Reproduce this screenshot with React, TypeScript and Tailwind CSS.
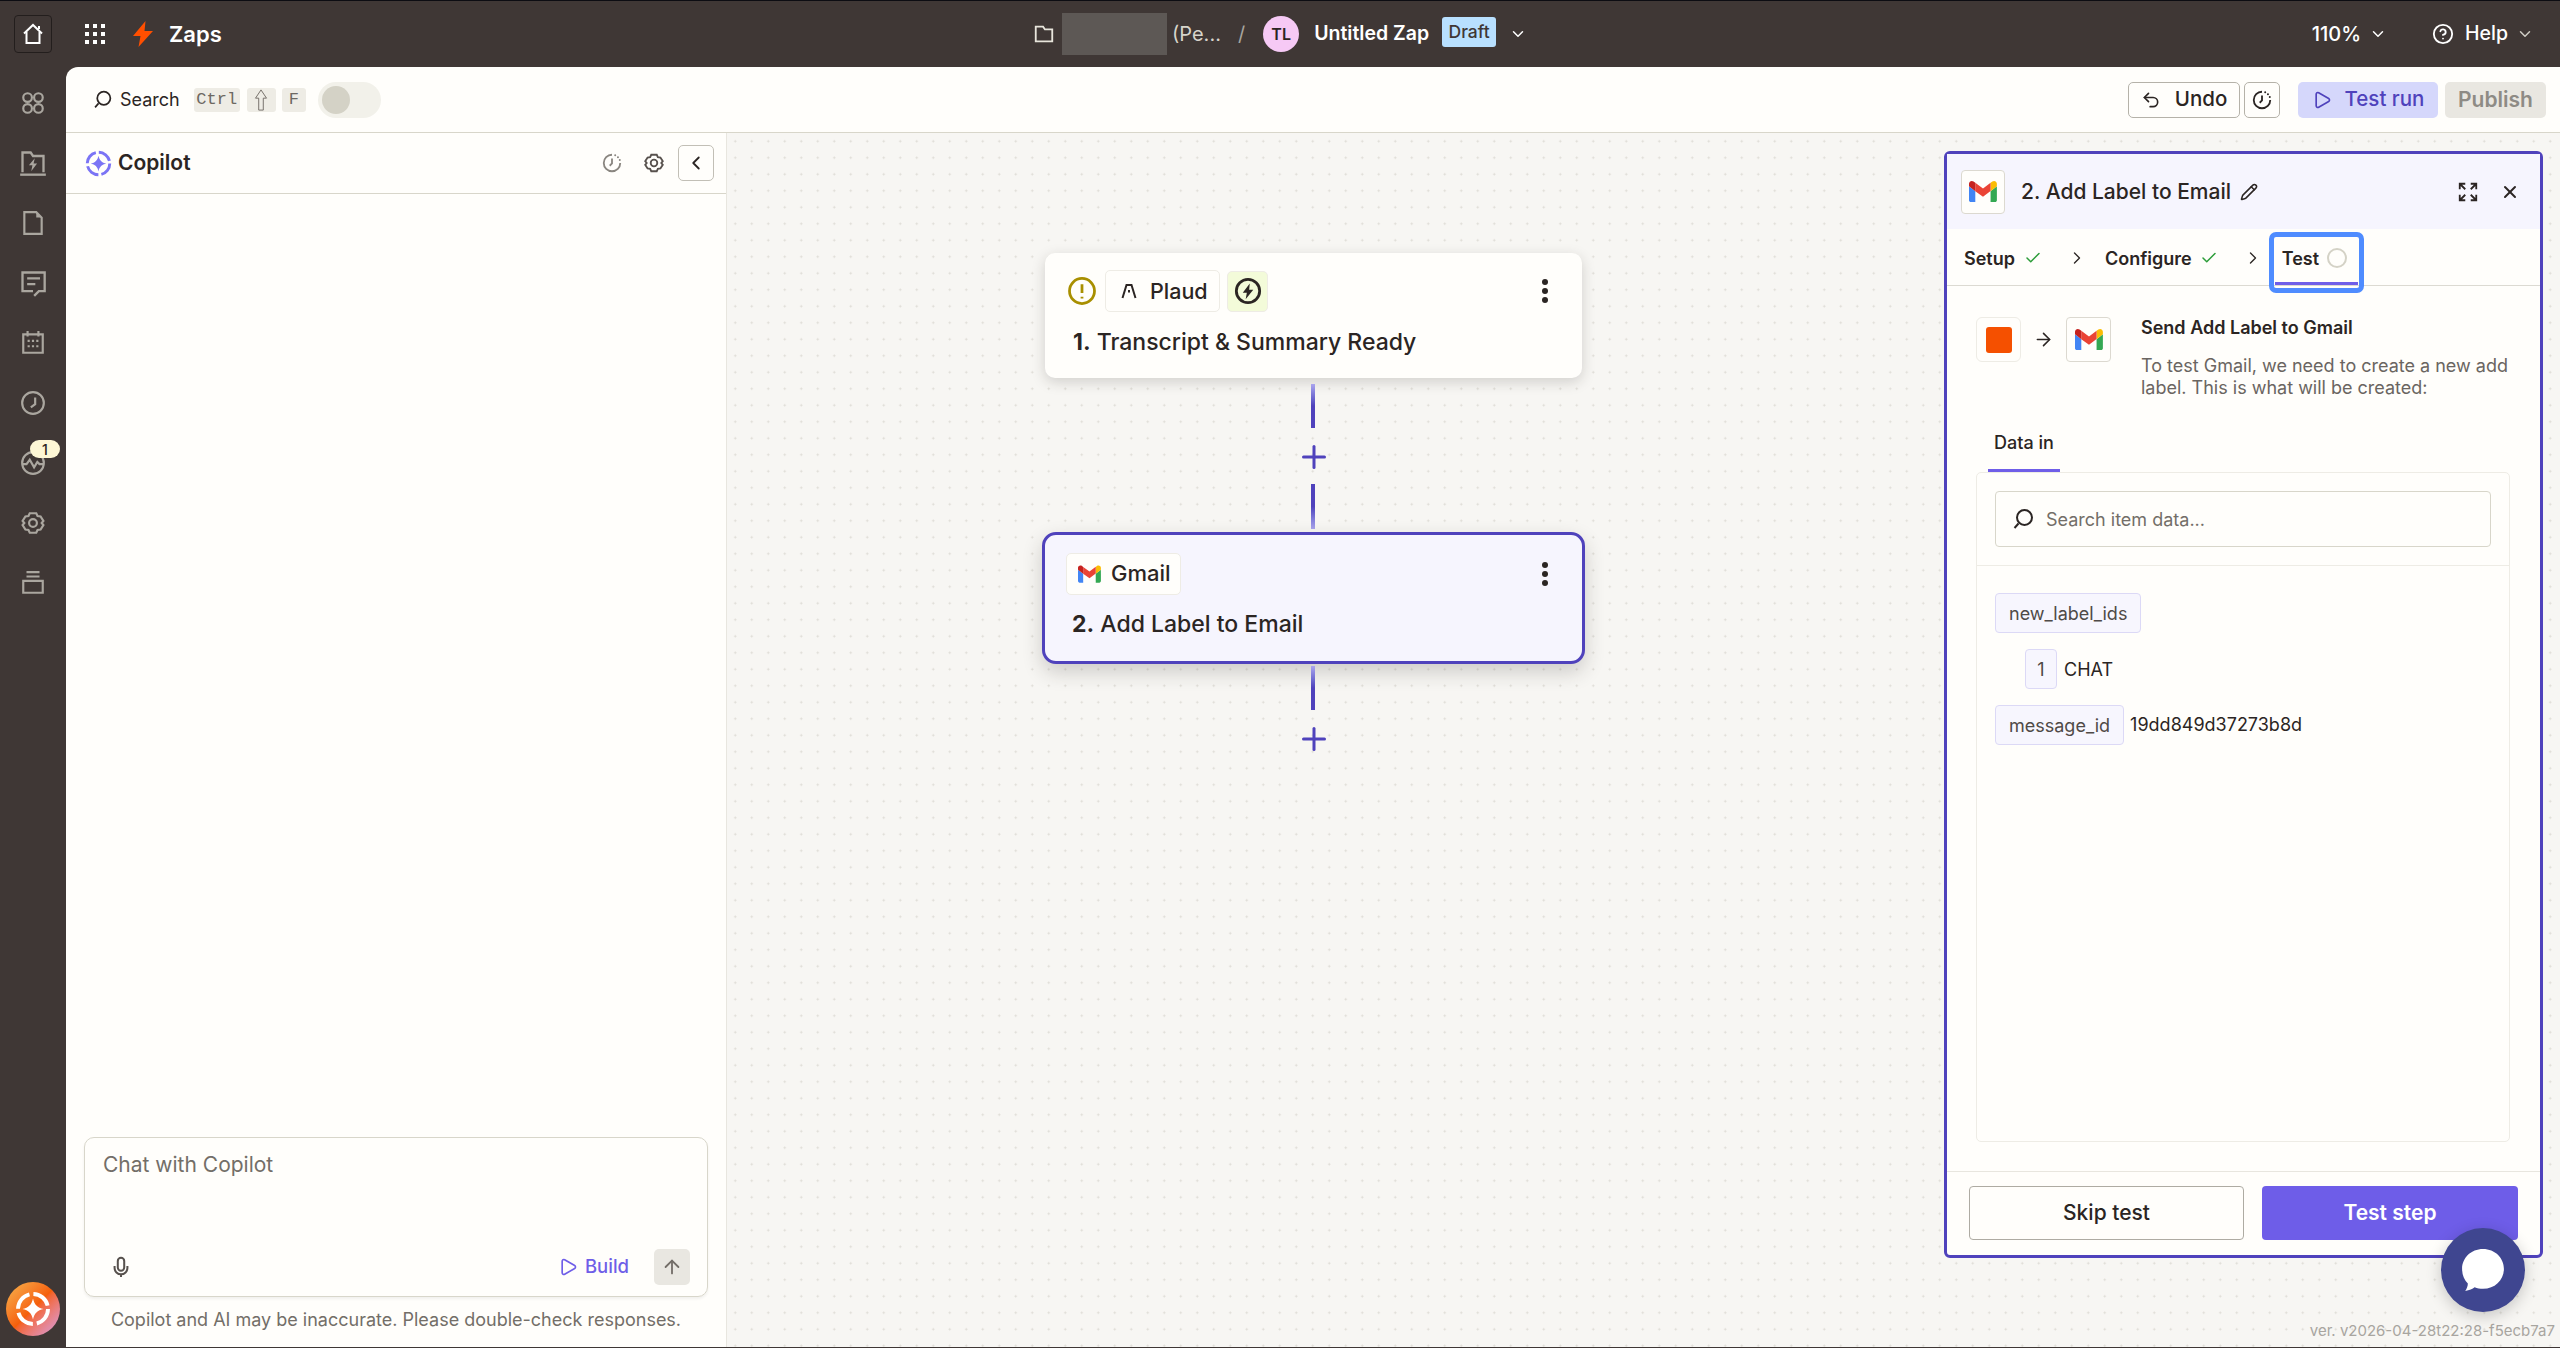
import {
  ArrowRight,
  ArrowUp,
  ChevronDown,
  ChevronLeft,
  ChevronRight,
  Check,
  CircleHelp,
  Pencil,
  Play,
  Plus,
  Undo2,
  X,
} from "lucide-react";

function Gmail({ className }: { className?: string }) {
  return (
    <svg viewBox="0 0 24 18" className={className}>
      <path fill="#4285F4" d="M1.6 18h3.8V8.7L0 4.6v11.8C0 17.3.7 18 1.6 18z" />
      <path fill="#34A853" d="M18.5 18h3.8c.9 0 1.6-.7 1.6-1.6V4.6l-5.4 4.1z" />
      <path fill="#FBBC04" d="M18.5 1.6v7.1l5.4-4.1V2.4c0-2-2.3-3.1-3.9-1.9z" />
      <path fill="#EA4335" d="M5.4 8.7V1.6L12 6.5l6.5-5v7.1L12 13.5z" />
      <path fill="#C5221F" d="M0 2.4v2.2l5.4 4.1V1.6L3.9.5C2.3-.7 0 .4 0 2.4z" />
    </svg>
  );
}

function Stroke({ className, children }: { className?: string; children: React.ReactNode }) {
  return (
    <svg viewBox="0 0 24 24" fill="none" stroke="currentColor" strokeWidth="2" className={className}>
      {children}
    </svg>
  );
}

function SearchGlyph({ className }: { className?: string }) {
  return (
    <Stroke className={className}>
      <circle cx="13.5" cy="10.5" r="7.5" />
      <path d="M7.5 16.5 L3.5 21" />
    </Stroke>
  );
}

function HistoryGlyph({ className }: { className?: string }) {
  return (
    <Stroke className={className}>
      <path d="M12 3a9 9 0 1 0 9 9" />
      <path d="M12 7v5.5l-2.500 2.500" />
      <path d="M15.500 3.600v.01M18.500 5.600v.01M20.500 8.600v.01" strokeWidth="2.200" strokeLinecap="round" />
    </Stroke>
  );
}

function GearGlyph({ className }: { className?: string }) {
  return (
    <Stroke className={className}>
      <circle cx="12" cy="12" r="3.6" />
      <path d="M9 3h6l1.2 2.6 2.8.4 2.6 4-1.6 2 1.6 2-2.6 4-2.8.4L15 21H9l-1.2-2.6-2.8-.4-2.6-4 1.6-2-1.6-2 2.6-4 2.8-.4z" />
    </Stroke>
  );
}

function Spark({ className, ring, star }: { className?: string; ring: string; star: string }) {
  return (
    <svg viewBox="0 0 24 24" fill="none" className={className}>
      <circle cx="12" cy="12" r="10" stroke={ring} strokeWidth="2.6" strokeDasharray="13 2.7" />
      <path fill={star} d="M12 5c.8 4 3 6.200 7 7-4 .8-6.200 3-7 7-.8-4-3-6.200-7-7 4-.8 6.200-3 7-7z" />
    </svg>
  );
}

function ExpandGlyph({ className }: { className?: string }) {
  return (
    <Stroke className={className}>
      <path d="M3 9V3h6M3 3l6 6" />
      <path d="M21 9V3h-6M21 3l-6 6" />
      <path d="M3 15v6h6M3 21l6-6" />
      <path d="M21 15v6h-6M21 21l-6-6" />
    </Stroke>
  );
}

const railIcons = [
  <Stroke className="size-[26px]" key="apps">
    <circle cx="7" cy="7" r="4" />
    <circle cx="17" cy="7" r="4" />
    <circle cx="7" cy="17" r="4" />
    <circle cx="17" cy="17" r="4" />
  </Stroke>,
  <Stroke className="size-[28px]" key="zaps">
    <path d="M3 20V3h7l2 3h9v14" />
    <path d="M1 22h22" />
    <path fill="currentColor" stroke="none" d="M13.500 8 8.500 14h3l-1 5 5-6.500h-3z" />
  </Stroke>,
  <Stroke className="size-[26px]" key="doc">
    <path d="M4 2h11l5 5v15H4z" />
    <path fill="currentColor" stroke="none" d="M15 2l5 5h-5z" />
  </Stroke>,
  <Stroke className="size-[28px]" key="chat">
    <path d="M12 19H3V3h19v16h-5l-4 4" />
    <path d="M7 8h11M7 13h7" />
  </Stroke>,
  <Stroke className="size-[26px]" key="calendar">
    <path d="M3 4h18v17H3z" />
    <path d="M7 1v5M17 1v5" />
    <path d="M7 10h2M11 10h2M15 10h2M7 15h2M11 15h2M15 15h2" />
  </Stroke>,
  <Stroke className="size-[26px]" key="clock">
    <circle cx="12" cy="12" r="10" />
    <path d="M14 7v6l-4 3" />
  </Stroke>,
  <Stroke className="size-[26px]" key="pulse">
    <circle cx="12" cy="12" r="10" />
    <path d="M2 13h4l3-4 4 7 3-5 2 2h4" />
  </Stroke>,
  <GearGlyph className="size-[26px]" key="gear" />,
  <Stroke className="size-[26px]" key="stack">
    <path d="M3 10h18v11H3z" />
    <path d="M6 6h12M6 2h12" />
  </Stroke>,
];

function Kbd({ children, className }: { children: React.ReactNode; className?: string }) {
  return (
    <span className={`flex h-6 items-center justify-center rounded-[3px] bg-[#eeece5] font-['Liberation_Mono',monospace] text-[17px] text-[#6d6862] ${className ?? ""}`}>
      {children}
    </span>
  );
}

function NodeDots() {
  return (
    <span className="flex flex-col gap-[3px]">
      <span className="size-[6px] rounded-full bg-[#2b2523]" />
      <span className="size-[6px] rounded-full bg-[#2b2523]" />
      <span className="size-[6px] rounded-full bg-[#2b2523]" />
    </span>
  );
}

function Connector({ from, plusOnly }: { from: number; plusOnly?: boolean }) {
  return (
    <div className="absolute left-[583px] flex w-[6px] flex-col items-center" style={{ top: from }}>
      <div className="h-[44px] w-[4px] shrink-0 bg-gradient-to-b from-[#aba5ee] to-[#4f42bc] to-50%" />
      <Plus className="ml-[2px] mt-[11px] size-[36px] shrink-0 text-[#4f42bc]" strokeWidth={2} />
      {!plusOnly && (
        <div className="mt-[9px] h-[45px] w-[4px] shrink-0 bg-gradient-to-t from-[#aba5ee] to-[#4f42bc] to-50%" />
      )}
    </div>
  );
}

function Chip({ children, className }: { children: React.ReactNode; className?: string }) {
  return (
    <span className={`flex h-10 items-center rounded-[4px] border border-[#dcd9f6] bg-[#f7f6fe] text-[18px] text-[#4f4a47] ${className ?? ""}`}>
      {children}
    </span>
  );
}

export default function App() {
  return (
    <div className="flex h-[1348px] w-full flex-col overflow-hidden bg-[#3f3735] font-['Inter',sans-serif] text-[#2b2523]">
      <div className="h-px bg-[#0c0c12]" />
      {/* Top bar */}
      <header className="relative flex h-[66px] shrink-0 items-center text-white">
        <div className="ml-[14px] flex size-[38px] items-center justify-center rounded-[4px] border border-[#231e1d]">
          <svg viewBox="0 0 24 24" fill="none" stroke="currentColor" strokeWidth="2" className="size-[24px]">
            <path d="M3 11.500 12 3l9 8.500" />
            <path d="M5.500 10v11h13V10" />
            <path d="M18 4v3" />
          </svg>
        </div>
        <div className="ml-[33px] grid grid-cols-3 gap-[4px]">
          {Array.from({ length: 9 }).map((_, i) => (
            <span key={i} className="size-[4px] bg-white" />
          ))}
        </div>
        <svg viewBox="0 0 20 26" className="ml-[28px] h-[26px] w-[20px]">
          <path fill="#ff4f00" d="M12.500 0 0 15h7.500L5.500 26 20 10h-8.500z" />
        </svg>
        <span className="ml-[16px] text-[22px] font-semibold">Zaps</span>

        <div className="absolute left-[1033px] top-0 flex h-full items-center">
          <svg viewBox="0 0 24 24" fill="none" stroke="#e8e5dc" strokeWidth="2" className="size-[22px]">
            <path d="M3 20V4h8l2 3h8v13z" />
          </svg>
          <span className="ml-[7px] h-[42px] w-[105px] bg-[#5d5855]" />
          <span className="ml-[5px] text-[20px] text-[#d7d4cb]">(Pe...</span>
          <span className="ml-[17px] text-[20px] text-[#a8a59f]">/</span>
          <span className="ml-[18px] flex size-[36px] items-center justify-center rounded-full bg-[#f6c9f5] text-[16px] font-semibold text-[#2b2523]">
            TL
          </span>
          <span className="ml-[15px] text-[19.500px] font-semibold">Untitled Zap</span>
          <span className="ml-[13px] flex h-[30px] w-[54px] -translate-y-[2px] items-center justify-center rounded-[3px] bg-[#b8e0ff] text-[17.500px] font-medium text-[#3f3735]">
            Draft
          </span>
          <ChevronDown className="ml-[13px] size-[18px]" strokeWidth={2} />
        </div>

        <div className="ml-auto mr-[26px] flex items-center">
          <span className="text-[20px] font-medium">110%</span>
          <ChevronDown className="ml-[8px] size-[18px]" />
          <CircleHelp className="ml-[45px] size-[22px]" />
          <span className="ml-[11px] text-[19.500px] font-medium">Help</span>
          <ChevronDown className="ml-[8px] size-[18px] text-[#cfccc4]" />
        </div>
      </header>

      <div className="flex min-h-0 flex-1">
        {/* Rail */}
        <aside className="relative flex w-[66px] shrink-0 flex-col items-center pt-[6px] text-[#aaa69f]">
          {railIcons.map((icon, i) => (
            <div key={i} className="relative flex h-[60px] w-full shrink-0 items-center justify-center">
              {icon}
              {i === 6 && (
                <span className="absolute left-[30px] top-[7px] flex h-[18px] w-[30px] items-center justify-center rounded-full bg-[#fdf7d5] text-[14px] font-medium text-[#2b2523]">
                  1
                </span>
              )}
            </div>
          ))}
          <div className="absolute bottom-[12px] left-[6px] flex size-[54px] items-center justify-center rounded-full bg-gradient-to-br from-[#f5b44c] via-[#f55f0a] to-[#d59be0]">
            <Spark className="size-[36px]" ring="#fff" star="#fff" />
          </div>
        </aside>

        <main className="mb-px flex min-w-0 flex-1 flex-col overflow-hidden rounded-tl-[12px] bg-[#fffefb]">
          {/* Toolbar */}
          <div className="flex h-[66px] shrink-0 items-center border-b border-[#d8d6ca] pl-[26px] pr-[14px]">
            <SearchGlyph className="size-[21px] text-[#2b2523]" />
            <span className="ml-[7px] text-[18px] text-[#2b2523]">Search</span>
            <Kbd className="ml-[14px] w-[46px]">Ctrl</Kbd>
            <Kbd className="ml-[7px] w-[29px]">
              <svg viewBox="0 0 14 24" fill="none" stroke="#6d6862" strokeWidth="1" className="h-[22px] w-[16px]">
                <path d="M7 1 1 10h3.500v13h5V10H13z" />
              </svg>
            </Kbd>
            <Kbd className="ml-[6px] w-[24px]">F</Kbd>
            <span className="ml-[12px] flex h-[36px] w-[63px] items-center rounded-full bg-[#f2f1ea] pl-[4px]">
              <span className="size-[28px] rounded-full bg-[#d4d2c6]" />
            </span>

            <button className="ml-auto flex h-[36px] w-[112px] items-center justify-center gap-[14px] rounded-[5px] border border-[#b5b2a9] text-[20.500px] font-medium">
              <Undo2 className="size-[20px]" />
              Undo
            </button>
            <button className="ml-[4px] flex h-[36px] w-[36px] items-center justify-center rounded-[5px] border border-[#b5b2a9]">
              <HistoryGlyph className="size-[22px]" />
            </button>
            <button className="ml-[18px] flex h-[36px] w-[140px] items-center justify-center gap-[13px] rounded-[5px] bg-[#d5d7fb] text-[20.500px] font-medium text-[#4f42bc]">
              <Play className="size-[20px]" />
              Test run
            </button>
            <button className="ml-[7px] flex h-[36px] w-[101px] items-center justify-center rounded-[5px] bg-[#e9e7e1] text-[21px] font-semibold text-[#8e8b85]">
              Publish
            </button>
          </div>

          <div className="flex min-h-0 flex-1">
            {/* Copilot */}
            <section className="flex w-[661px] shrink-0 flex-col border-r border-[#e8e6df] bg-[#fffefb]">
              <div className="flex h-[61px] shrink-0 items-center border-b border-[#d8d6ca] pl-[19px] pr-[12px]">
                <Spark className="size-[27px]" ring="#7b74f5" star="#7b74f5" />
                <span className="ml-[6px] text-[21px] font-semibold">Copilot</span>
                <HistoryGlyph className="ml-auto size-[22px] text-[#8a8680]" />
                <GearGlyph className="ml-[20px] size-[22px] text-[#57514d]" />
                <button className="ml-[13px] flex size-[36px] items-center justify-center rounded-[5px] border border-[#c2bfb6]">
                  <ChevronLeft className="size-[22px]" />
                </button>
              </div>
              <div className="flex-1" />
              <div className="mx-[18px] flex h-[160px] shrink-0 flex-col rounded-[10px] border border-[#d8d6ca] shadow-[0_2px_3px_rgba(0,0,0,0.06)]">
                <span className="ml-[18px] mt-[11px] text-[21px] text-[#736e68]">Chat with Copilot</span>
                <div className="mt-auto mb-[11px] flex items-center pl-[25px] pr-[17px]">
                  <svg viewBox="0 0 24 24" fill="none" stroke="#57514d" strokeWidth="2.200" className="size-[22px]">
                    <rect x="8.500" y="2" width="7" height="14" rx="3.500" />
                    <path d="M5 11v2a7 7 0 0 0 14 0v-2M12 20v3" />
                  </svg>
                  <Play className="ml-auto size-[20px] text-[#6f5ee8]" />
                  <span className="ml-[7px] text-[18.500px] font-medium text-[#6f5ee8]">Build</span>
                  <span className="ml-[25px] flex size-[36px] items-center justify-center rounded-[5px] bg-[#e9e7e1]">
                    <ArrowUp className="size-[22px] text-[#736e68]" />
                  </span>
                </div>
              </div>
              <p className="mb-[14px] mt-[9px] text-center text-[18px] text-[#736e68]">
                Copilot and AI may be inaccurate. Please double-check responses.
              </p>
            </section>

            {/* Canvas */}
            <div className="relative min-w-0 flex-1 bg-[#f7f6f3] bg-[radial-gradient(#dcdad3_0.9px,transparent_1.1px)] bg-[size:16.500px_16.500px]">
              {/* Trigger node */}
              <div className="absolute left-[318px] top-[120px] h-[125px] w-[537px] rounded-[10px] bg-[#fffefb] px-[23px] shadow-[0_4px_14px_rgba(40,35,30,0.18)]">
                <div className="flex h-[76px] items-center">
                  <svg viewBox="0 0 24 24" fill="none" stroke="#a88f00" strokeWidth="2.200" className="ml-[-1px] size-[30px]">
                    <circle cx="12" cy="12" r="10" />
                    <path d="M12 6.500v7M12 16.500v1.500" />
                  </svg>
                  <span className="ml-[8px] flex h-[42px] w-[115px] items-center rounded-[5px] border border-[#eeece5] pl-[14px]">
                    <svg viewBox="0 0 18 18" fill="none" stroke="#2b2523" strokeWidth="2" className="size-[18px]">
                      <path d="M2.500 16 6.500 3h5l4 13" />
                      <path d="M9 8v2.500" />
                    </svg>
                    <span className="ml-[12px] text-[21.500px] font-medium">Plaud</span>
                  </span>
                  <span className="ml-[7px] flex h-[41px] w-[41px] items-center justify-center rounded-[5px] border border-[#eeece5] bg-[#f3fbd9]">
                    <svg viewBox="0 0 24 24" fill="none" className="size-[28px]">
                      <circle cx="12" cy="12" r="10" stroke="#2b2523" strokeWidth="2.400" />
                      <path fill="#2b2523" d="M13.500 5.500 7.500 13.500h3.500l-1 5.500 6.500-8h-3.500z" />
                    </svg>
                  </span>
                  <span className="ml-auto mr-[11px]">
                    <NodeDots />
                  </span>
                </div>
                <p className="ml-[5px] mt-[1px] text-[23px] font-medium leading-[24px]">
                  <b className="font-bold">1.</b> Transcript &amp; Summary Ready
                </p>
              </div>

              <Connector from={251} />

              {/* Action node */}
              <div className="absolute left-[315px] top-[399px] h-[132px] w-[543px] rounded-[14px] border-[3px] border-[#4f42bc] bg-[#f6f5fe] px-[21px] shadow-[0_8px_20px_rgba(40,35,30,0.2)]">
                <div className="flex h-[77px] items-center">
                  <span className="flex h-[42px] w-[115px] items-center rounded-[5px] border border-[#eeece5] bg-[#fffefb] pl-[11px]">
                    <Gmail className="h-[20px] w-[23px]" />
                    <span className="ml-[10px] text-[22px] font-medium">Gmail</span>
                  </span>
                  <span className="ml-auto mr-[13px]">
                    <NodeDots />
                  </span>
                </div>
                <p className="ml-[6px] text-[23px] font-medium leading-[24px]">
                  <b className="font-bold">2.</b> Add Label to Email
                </p>
              </div>

              <Connector from={533} plusOnly />

              {/* Step panel */}
              <aside className="absolute right-[17px] top-[18px] flex h-[1107px] w-[599px] flex-col rounded-[6px] border-[3px] border-[#4f42bc] bg-[#fffefb]">
                <div className="flex h-[75px] shrink-0 items-center bg-[#f6f5fe] pl-[14px] pr-[20px]">
                  <span className="flex size-[44px] items-center justify-center rounded-[4px] border border-[#dcd9d0] bg-[#fffefb]">
                    <Gmail className="h-[21px] w-[28px]" />
                  </span>
                  <span className="ml-[16px] text-[21px] font-medium">2. Add Label to Email</span>
                  <Pencil className="ml-[9px] size-[18px]" />
                  <ExpandGlyph className="ml-auto mr-[2px] size-[22px]" />
                  <X className="ml-[19px] size-[20px]" strokeWidth={2.4} />
                </div>
                <div className="flex h-[57px] shrink-0 items-center border-b border-[#dcdad2] pl-[17px] pt-[2px]">
                  <span className="text-[18px] font-semibold">Setup</span>
                  <Check className="ml-[9px] size-[18px] text-[#2d9d3a]" />
                  <ChevronRight className="ml-[25px] size-[20px]" strokeWidth={1.6} />
                  <span className="ml-[18px] text-[18px] font-semibold">Configure</span>
                  <Check className="ml-[8px] size-[18px] text-[#2d9d3a]" />
                  <ChevronRight className="ml-[25px] size-[20px]" strokeWidth={1.6} />
                  <span className="relative ml-[19px] flex items-center gap-[8px]">
                    <span className="text-[18px] font-semibold">Test</span>
                    <span className="size-[20px] rounded-full border-2 border-[#d4d2c6]" />
                    <span className="absolute -left-[13px] -top-[13px] h-[61px] w-[95px] rounded-[7px] border-[5px] border-[#4f8cff]">
                      <span className="absolute bottom-[3px] left-[1px] right-[1px] h-[3px] bg-[#6f5ee8]" />
                    </span>
                  </span>
                </div>

                <div className="flex min-h-0 flex-1 flex-col pl-[29px] pr-[30px]">
                  <div className="flex pt-[31px]">
                    <span className="flex h-[45px] w-[45px] shrink-0 items-center justify-center rounded-[6px] border border-[#eeece5]">
                      <span className="size-[26px] rounded-[3px] bg-[#f55000]" />
                    </span>
                    <ArrowRight className="mx-[12px] mt-[12px] size-[21px] shrink-0" strokeWidth={1.8} />
                    <span className="flex h-[45px] w-[45px] shrink-0 items-center justify-center rounded-[4px] border border-[#dcd9d0]">
                      <Gmail className="h-[21px] w-[28px]" />
                    </span>
                    <div className="ml-[30px]">
                      <p className="text-[18px] font-semibold leading-[22px]">Send Add Label to Gmail</p>
                      <p className="mt-[16px] text-[18px] leading-[22px] text-[#6a6561]">
                        To test Gmail, we need to create a new add label. This is what will be created:
                      </p>
                    </div>
                  </div>
                  <div className="mt-[29px] flex h-[44px] shrink-0">
                    <span className="ml-[12px] flex w-[72px] justify-center border-b-[3px] border-[#6f5ee8] pt-[1px] text-[18px] font-medium">
                      Data in
                    </span>
                  </div>
                  <div className="mb-[29px] flex min-h-0 flex-1 flex-col rounded-[5px] border border-[#eeece5]">
                    <div className="shrink-0 border-b border-[#eeece5] px-[18px] pb-[18px] pt-[18px]">
                      <div className="flex h-[56px] items-center rounded-[4px] border border-[#d8d6ca] pl-[15px]">
                        <SearchGlyph className="size-[24px] text-[#2b2523]" />
                        <span className="ml-[11px] text-[18px] text-[#736e68]">Search item data...</span>
                      </div>
                    </div>
                    <div className="flex flex-col gap-[16px] px-[18px] pt-[27px]">
                      <div className="flex">
                        <Chip className="px-[13px]">new_label_ids</Chip>
                      </div>
                      <div className="flex items-center pl-[30px]">
                        <Chip className="w-[32px] justify-center">1</Chip>
                        <span className="ml-[7px] text-[18px]">CHAT</span>
                      </div>
                      <div className="flex items-center">
                        <Chip className="px-[13px]">message_id</Chip>
                        <span className="ml-[6px] -mt-[2px] text-[18px]">19dd849d37273b8d</span>
                      </div>
                    </div>
                  </div>
                </div>

                <div className="flex h-[84px] shrink-0 items-start gap-[18px] border-t border-[#e8e6df] px-[22px] pt-[14px]">
                  <button className="flex h-[54px] w-[275px] items-center justify-center rounded-[4px] border border-[#aeaba3] text-[21px] font-medium">
                    Skip test
                  </button>
                  <button className="flex h-[54px] w-[256px] items-center justify-center rounded-[4px] bg-[#6e5de8] text-[21px] font-semibold text-white">
                    Test step
                  </button>
                </div>
              </aside>

              <span className="absolute bottom-[5px] right-[5px] text-[15px] text-[#a8a5a0]">
                ver. v2026-04-28t22:28-f5ecb7a7
              </span>
              <div className="absolute bottom-[35px] right-[35px] flex size-[84px] items-center justify-center rounded-full bg-[#3f4690] shadow-[0_4px_16px_rgba(0,0,0,0.2)]">
                <svg viewBox="0 0 44 44" className="size-[46px]">
                  <path fill="#fff" d="M22 2c11.500 0 20 8.500 20 19s-8.500 19-20 19c-3 0-5.500-.5-8-1.500-2 1.500-5 3-9 3.500 1.500-2 2.500-4.500 2.500-7C4 31.500 2 26.500 2 21 2 10.500 10.500 2 22 2z" />
                </svg>
              </div>
            </div>
          </div>
        </main>
      </div>
    </div>
  );
}
